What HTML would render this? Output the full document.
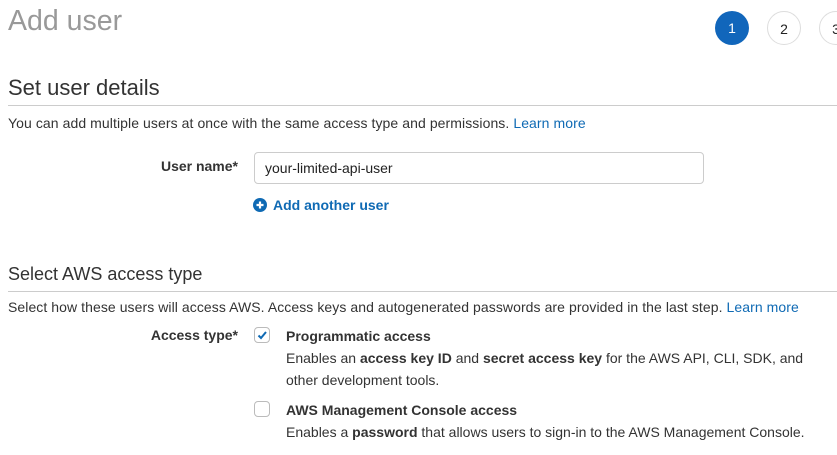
<!DOCTYPE html>
<html><head><style>
body{margin:0;width:837px;height:455px;overflow:hidden;background:#fff;font-family:"Liberation Sans",Arial,sans-serif;color:#333;position:relative}
.a{position:absolute;white-space:nowrap}
.c{position:absolute;width:34px;height:34px;border-radius:50%;text-align:center;line-height:34px;font-size:14px;box-sizing:border-box}
.hr{position:absolute;left:8px;right:0;height:1px;background:#ccc}
a{color:#0f6ab4;text-decoration:none}
.lbl{position:absolute;right:599px;font-weight:bold;font-size:14px;color:#333}
.cb{position:absolute;left:254px;width:16px;height:16px;border:1px solid #bbb;border-radius:4px;box-sizing:border-box;background:#fff}
b{color:#333}
</style></head><body>
<div class="a" style="left:8px;top:5px;font-size:28.5px;color:#999">Add user</div>
<div class="c" style="left:715px;top:11px;background:#1166bb;color:#fff">1</div>
<div class="c" style="left:767px;top:11px;border:1px solid #ddd;color:#222">2</div>
<div class="c" style="left:819px;top:11px;border:1px solid #ddd;color:#222">3</div>
<div class="a" style="left:8px;top:75px;font-size:22px;color:#333">Set user details</div>
<div class="hr" style="top:105px"></div>
<div class="a" style="left:8px;top:115px;font-size:14px;letter-spacing:0.08px">You can add multiple users at once with the same access type and permissions. <a>Learn more</a></div>
<div class="lbl" style="top:158px">User name*</div>
<div class="a" style="left:254px;top:152px;width:450px;height:32px;border:1px solid #ccc;border-radius:4px;box-sizing:border-box;font-size:14px;line-height:30px;padding-left:10px;color:#222">your-limited-api-user</div>
<svg class="a" style="left:253px;top:198px" width="14" height="14" viewBox="0 0 14 14"><circle cx="7" cy="7" r="7" fill="#0f6ab4"/><path d="M7 3.5v7M3.5 7h7" stroke="#fff" stroke-width="2.2"/></svg>
<div class="a" style="left:273px;top:197px;font-size:14px;font-weight:bold;color:#0f6ab4">Add another user</div>
<div class="a" style="left:8px;top:264px;font-size:18px;color:#333">Select AWS access type</div>
<div class="hr" style="top:291px"></div>
<div class="a" style="left:8px;top:299px;font-size:14px;letter-spacing:0.07px">Select how these users will access AWS. Access keys and autogenerated passwords are provided in the last step. <a>Learn more</a></div>
<div class="lbl" style="top:327px">Access type*</div>
<div class="cb" style="top:327px"><svg width="14" height="14" viewBox="0 0 14 14" style="position:absolute;left:0;top:0"><path d="M3.5 7.5l2.5 2.5 5-6" stroke="#0f6ab4" stroke-width="2" fill="none"/></svg></div>
<div class="a" style="left:286px;top:328px;font-size:14px;font-weight:bold">Programmatic access</div>
<div class="a" style="left:286px;top:347px;font-size:14px;line-height:22px">Enables an <b>access key ID</b> and <b>secret access key</b> for the AWS API, CLI, SDK, and<br>other development tools.</div>
<div class="cb" style="top:401px"></div>
<div class="a" style="left:286px;top:402px;font-size:14px;font-weight:bold">AWS Management Console access</div>
<div class="a" style="left:286px;top:424px;font-size:14px">Enables a <b>password</b> that allows users to sign-in to the AWS Management Console.</div>
</body></html>
